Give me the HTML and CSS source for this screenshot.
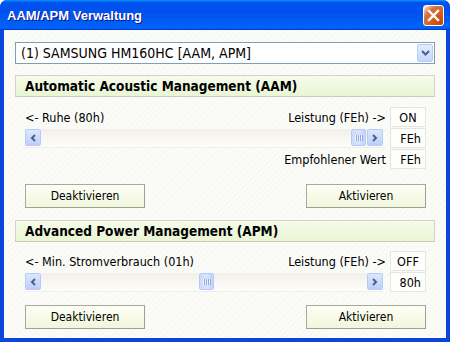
FILE: index.html
```html
<!DOCTYPE html>
<html lang="de">
<head>
  <meta charset="UTF-8">
  <title>AAM/APM Verwaltung</title>
  <link rel="stylesheet" href="styles.css">
</head>
<body>
  <div class="window">
    <div class="titlebar">
      <span class="title">AAM/APM Verwaltung</span>
      <span class="close">
        <svg width="13" height="13" viewBox="0 0 13 13"><path d="M2 2 L11 11 M11 2 L2 11" stroke="#fff" stroke-width="2.4" stroke-linecap="square"/></svg>
      </span>
    </div>

    <div class="client">
      <div class="combo">
        <span class="combo-text">(1) SAMSUNG HM160HC [AAM, APM]</span>
        <span class="combo-drop">
          <svg width="9" height="6" viewBox="0 0 9 6"><path d="M1 1 L4.5 4.5 L8 1" fill="none" stroke="#4d6185" stroke-width="2"/></svg>
        </span>
      </div>

      <!-- AAM -->
      <div class="group">
        <div class="group-head">Automatic Acoustic Management (AAM)</div>
        <div class="group-body">
          <div class="row">
            <span class="lbl-left">&lt;- Ruhe (80h)</span>
            <span class="lbl-right">Leistung (FEh) -&gt;</span>
            <span class="box center">ON</span>
          </div>
          <div class="row">
            <div class="scrollbar">
              <span class="sb-btn"><svg width="6" height="8" viewBox="0 0 6 8"><path d="M5 1 L2 4 L5 7" fill="none" stroke="#4d6185" stroke-width="2"/></svg></span>
              <div class="sb-track">
                <span class="sb-thumb" style="margin-left: auto"><i></i><i></i><i></i><i></i></span>
              </div>
              <span class="sb-btn"><svg width="6" height="8" viewBox="0 0 6 8"><path d="M1 1 L4 4 L1 7" fill="none" stroke="#4d6185" stroke-width="2"/></svg></span>
            </div>
            <span class="box">FEh</span>
          </div>
          <div class="row">
            <span class="lbl-right">Empfohlener Wert</span>
            <span class="box">FEh</span>
          </div>
          <div class="buttons">
            <button class="btn">Deaktivieren</button>
            <button class="btn">Aktivieren</button>
          </div>
        </div>
      </div>

      <!-- APM -->
      <div class="group apm">
        <div class="group-head">Advanced Power Management (APM)</div>
        <div class="group-body">
          <div class="row">
            <span class="lbl-left">&lt;- Min. Stromverbrauch (01h)</span>
            <span class="lbl-right">Leistung (FEh) -&gt;</span>
            <span class="box center">OFF</span>
          </div>
          <div class="row">
            <div class="scrollbar">
              <span class="sb-btn"><svg width="6" height="8" viewBox="0 0 6 8"><path d="M5 1 L2 4 L5 7" fill="none" stroke="#4d6185" stroke-width="2"/></svg></span>
              <div class="sb-track">
                <span class="sb-thumb" style="margin-left: 157px"><i></i><i></i><i></i><i></i></span>
              </div>
              <span class="sb-btn"><svg width="6" height="8" viewBox="0 0 6 8"><path d="M1 1 L4 4 L1 7" fill="none" stroke="#4d6185" stroke-width="2"/></svg></span>
            </div>
            <span class="box">80h</span>
          </div>
          <div class="buttons">
            <button class="btn">Deaktivieren</button>
            <button class="btn">Aktivieren</button>
          </div>
        </div>
      </div>
    </div>
  </div>
</body>
</html>
```

FILE: styles.css
```css
* {
  box-sizing: border-box;
}
body {
  margin: 0;
  font-family: "DejaVu Sans Condensed", "Liberation Sans", sans-serif;
  font-size: 12.5px;
  color: #000;
}
.window {
  width: 450px;
  height: 342px;
  display: flex;
  flex-direction: column;
  background: #0a46dc;
  border-radius: 7px 7px 0 0;
  overflow: hidden;
}
.titlebar {
  height: 30px;
  flex: none;
  display: flex;
  align-items: center;
  justify-content: space-between;
  padding: 0 6px 0 7px;
  background: linear-gradient(180deg, #0997ff, #0053ee 8%, #0050ee 40%, #0062f6 88%, #0062f6 93%, #005bff 95%, #003dd7 96%, #003dd7);
}
.title {
  color: #fff;
  font-family: "Liberation Sans", sans-serif;
  font-weight: bold;
  font-size: 13px;
  text-shadow: 1px 1px #0f1089;
  margin-top: 1px;
}
.close {
  width: 21px;
  height: 21px;
  display: flex;
  align-items: center;
  justify-content: center;
  border: 1px solid #fff;
  border-radius: 3px;
  background: radial-gradient(circle at 90% 90%, #cc4600 0, #dc6527 55%, #cd7546 70%, #ffccb2 90%, #fff 100%);
}
.client {
  flex: 1;
  margin: 0 4px 4px 4px;
  padding: 12px 11px 0 11px;
  background-color: #fbfbf8;
  background-image: repeating-linear-gradient(135deg, rgba(0,0,0,0.018) 0 1px, transparent 1px 4px);
}
.combo {
  height: 22px;
  display: flex;
  align-items: center;
  justify-content: space-between;
  background: #fff;
  border: 1px solid #7f9db9;
  padding: 0 1px 0 5px;
  font-size: 14px;
}
.combo-drop {
  width: 16px;
  height: 18px;
  display: flex;
  align-items: center;
  justify-content: center;
  border: 1px solid #b9cbf3;
  border-radius: 2px;
  background: linear-gradient(180deg, #e4ecfd, #c6d6fa);
}
.group {
  margin-top: 11px;
}
.group.apm {
  margin-top: 12px;
}
.group-head {
  height: 22px;
  display: flex;
  align-items: center;
  padding-left: 9px;
  font-weight: bold;
  font-size: 13.5px;
  border: 1px solid #d2d4c8;
  border-bottom-color: #c9cbbd;
  background: linear-gradient(180deg, #f6fbea, #e9f5d3);
}
.group-body {
  padding: 10px 9px 0 10px;
}
.apm .group-body {
  padding-top: 9px;
}
.row {
  height: 20px;
  display: flex;
  align-items: center;
  gap: 4px;
  margin-bottom: 1px;
}
.lbl-left {
  margin-right: auto;
}
.lbl-right {
  margin-left: auto;
}
.box {
  width: 36px;
  height: 20px;
  flex: none;
  display: flex;
  align-items: center;
  justify-content: flex-end;
  padding-right: 4px;
  background: #fefefd;
  border: 1px solid #e6e6df;
}
.box.center {
  justify-content: center;
  padding: 0;
}
.scrollbar {
  flex: 1;
  height: 19px;
  display: flex;
  align-items: center;
  background: linear-gradient(180deg, #f2f0ea, #fdfdfb);
  border-bottom: 1px solid #f0efe9;
  margin-right: 3px;
}
.sb-btn {
  width: 16px;
  height: 17px;
  flex: none;
  display: flex;
  align-items: center;
  justify-content: center;
  border: 1px solid #b8cbf4;
  border-radius: 2px;
  background: linear-gradient(180deg, #dce7fd, #bccff9);
}
.sb-track {
  flex: 1;
  display: flex;
  padding: 0 1px;
}
.sb-thumb {
  width: 15px;
  height: 17px;
  display: flex;
  align-items: center;
  justify-content: center;
  gap: 1px;
  border: 1px solid #b8cbf4;
  border-radius: 2px;
  background: linear-gradient(90deg, #cbdafc, #d8e3fd 50%, #c3d4fb);
}
.sb-thumb i {
  width: 1px;
  height: 6px;
  background: #eef3fe;
  box-shadow: 1px 0 #8ca6e0;
}
.buttons {
  display: flex;
  justify-content: space-between;
  margin-top: 15px;
}
.apm .buttons {
  margin-top: 13px;
}
.btn {
  width: 120px;
  height: 24px;
  font-family: inherit;
  font-size: 12px;
  color: #000;
  border: 1px solid #aaa99d;
  border-right-color: #a1a094;
  border-bottom-color: #a1a094;
  background: linear-gradient(180deg, #fdfef4, #f0f7dc);
  padding: 0;
}
```
